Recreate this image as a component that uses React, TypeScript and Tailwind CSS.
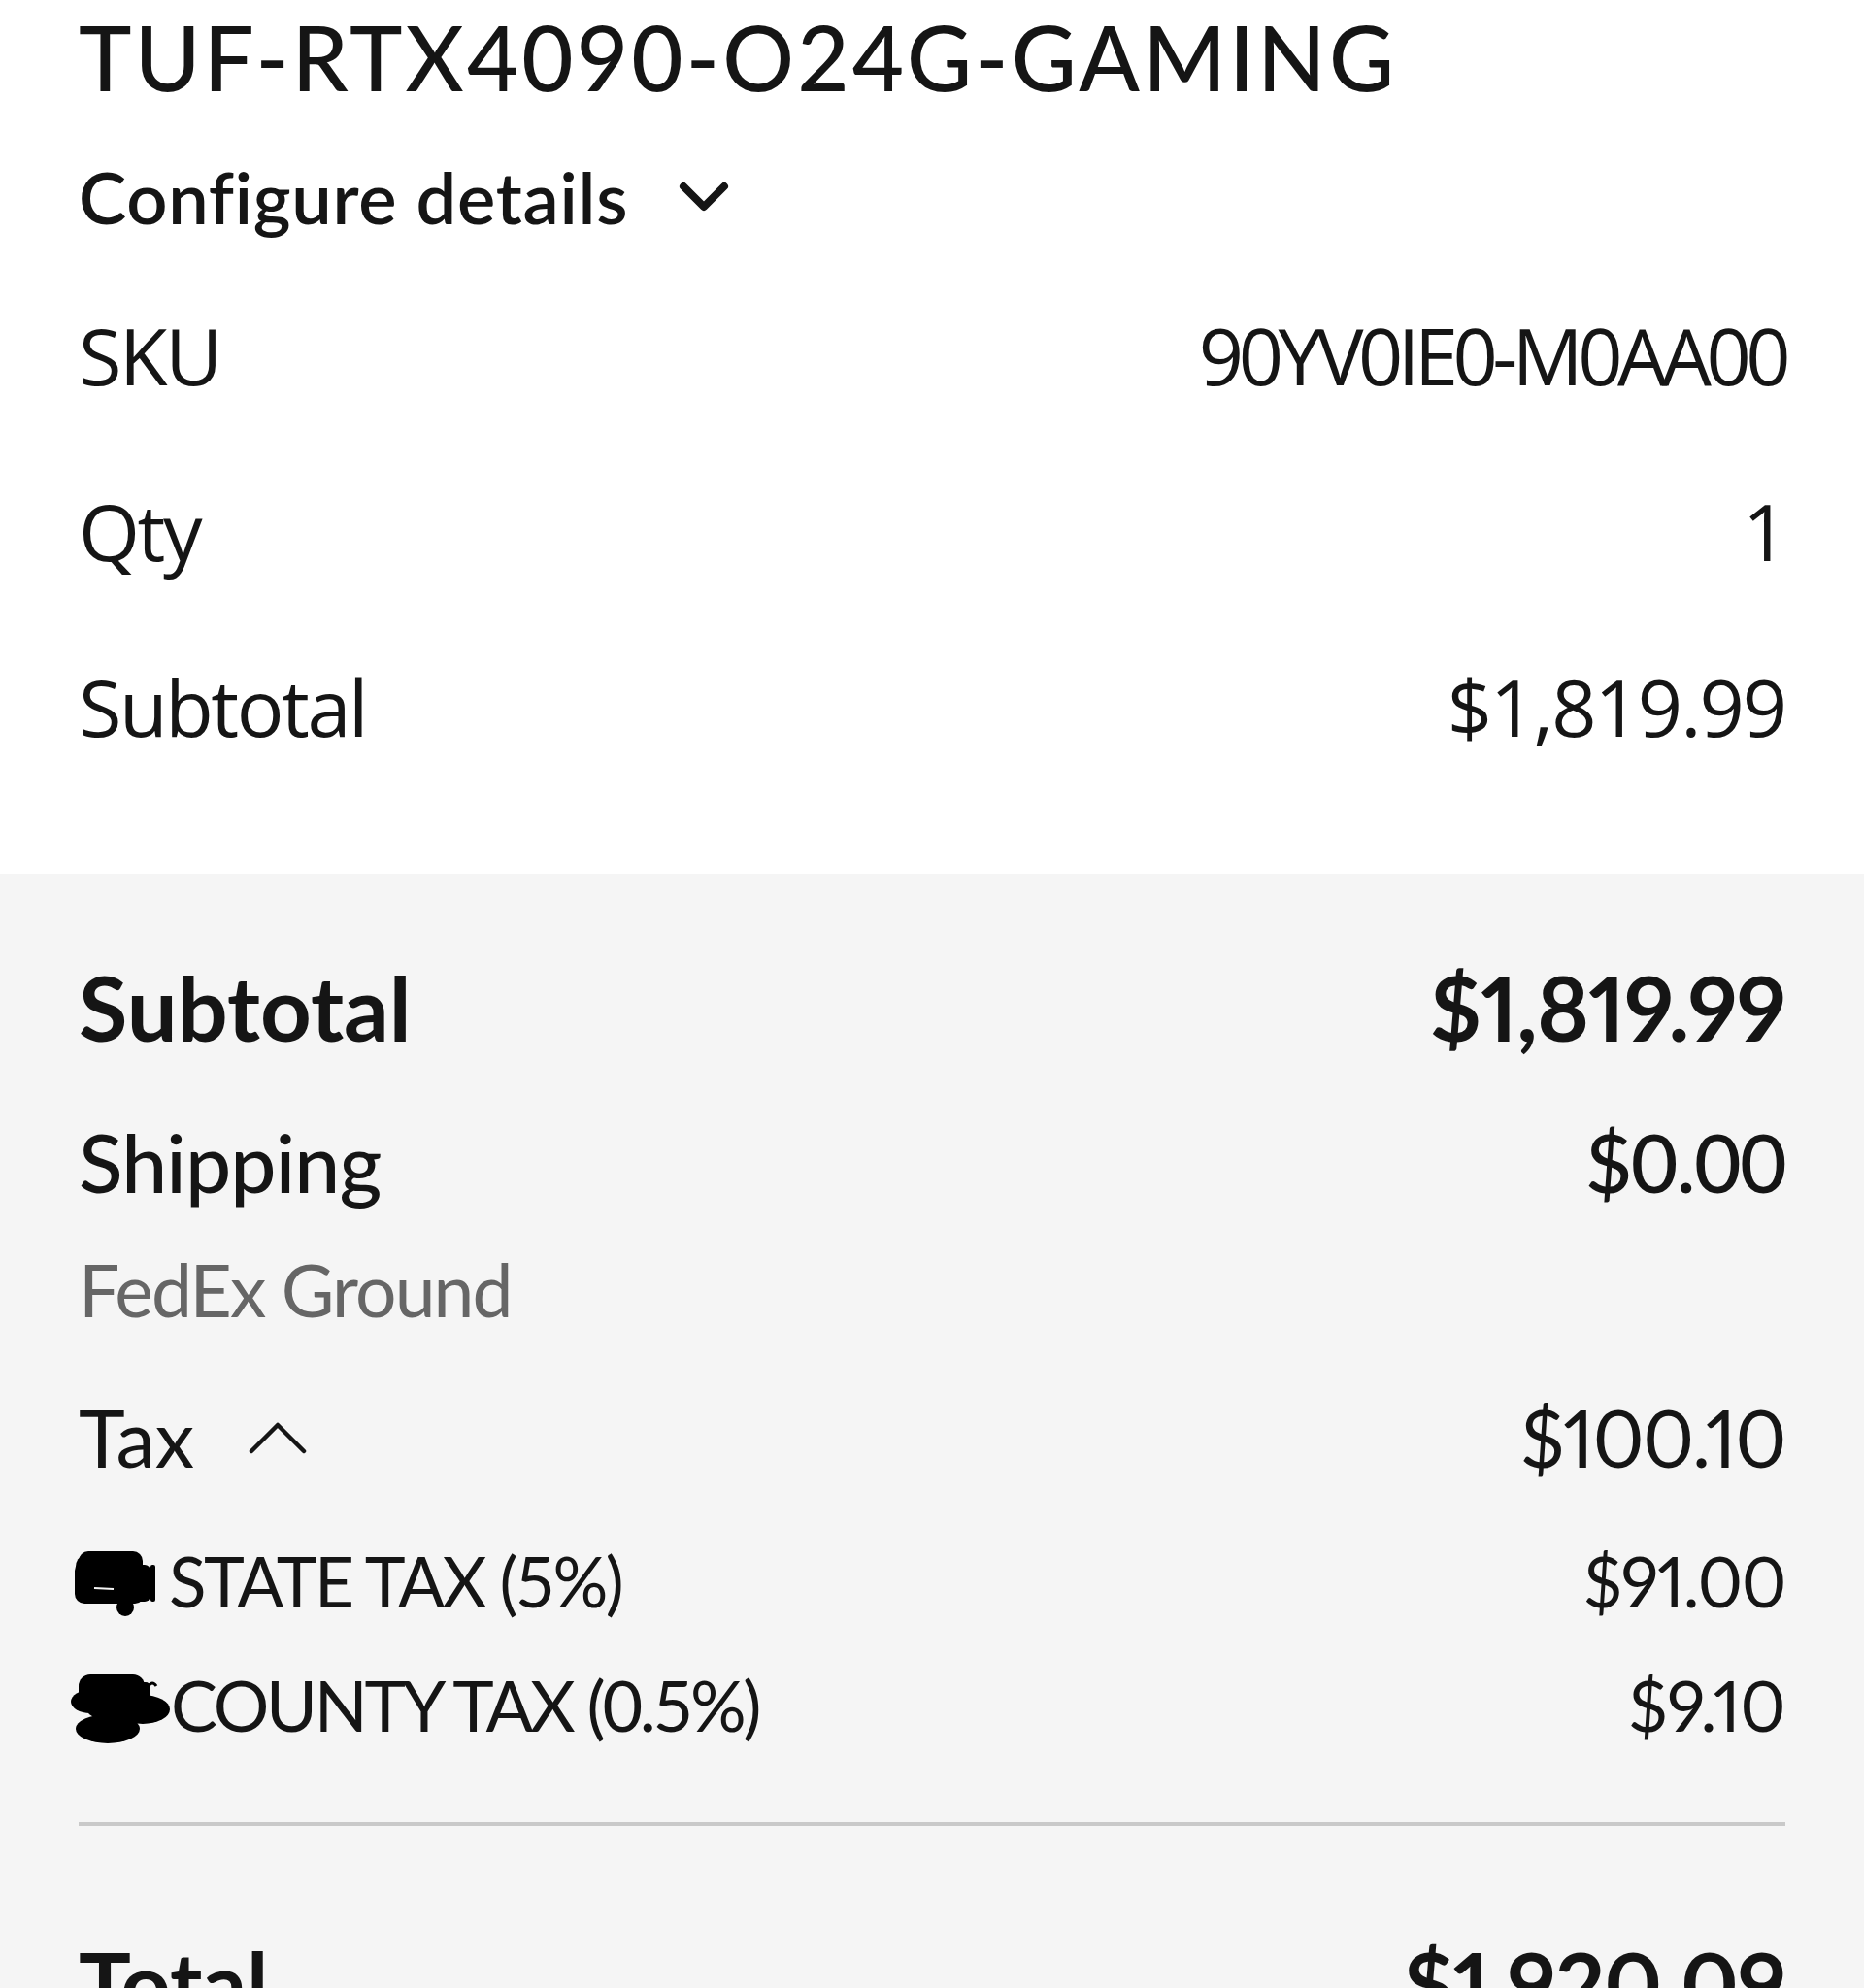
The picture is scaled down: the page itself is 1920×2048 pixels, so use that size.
import { ReactNode } from "react";

const ChevronDown = () => (
  <svg width="52" height="34" viewBox="0 0 52 34" className="ml-[52px] shrink-0" fill="none">
    <polyline points="5,6 26,27 47,6" stroke="#151515" strokeWidth="8" strokeLinecap="round" strokeLinejoin="round" />
  </svg>
);

const ChevronUp = () => (
  <svg width="60" height="36" viewBox="0 0 60 36" className="ml-[56px] shrink-0" fill="none">
    <polyline points="3,32 30,5 57,32" stroke="#151515" strokeWidth="4.5" strokeLinecap="round" strokeLinejoin="round" />
  </svg>
);

// black marker scribbles over the state / county names
const StateScribble = () => (
  <svg width="97" height="90" viewBox="0 0 97 90" className="shrink-0 -ml-[4px]" style={{ overflow: "visible" }}>
    <g fill="#000">
      <rect x="0" y="24" width="72" height="44" rx="10" />
      <rect x="4" y="14" width="66" height="24" rx="10" />
      <ellipse cx="9" cy="30" rx="8" ry="11" />
      <ellipse cx="52" cy="72" rx="9" ry="9" />
      <rect x="58" y="28" width="20" height="38" rx="6" />
      <rect x="78" y="28" width="5" height="38" rx="2" />
    </g>
    <path d="M20 52 L40 53" stroke="#f5f5f5" strokeWidth="2" />
  </svg>
);

const CountyScribble = () => (
  <svg width="103" height="90" viewBox="0 0 103 90" className="shrink-0 -ml-[8px]" style={{ overflow: "visible" }}>
    <g fill="#000">
      <rect x="8" y="14" width="68" height="34" rx="12" />
      <ellipse cx="20" cy="42" rx="20" ry="12" />
      <rect x="16" y="32" width="66" height="26" rx="10" />
      <ellipse cx="74" cy="50" rx="28" ry="15" />
      <ellipse cx="38" cy="70" rx="33" ry="15" />
      <rect x="70" y="22" width="12" height="20" rx="5" />
    </g>
    <path d="M80 26 Q84 20 88 26" stroke="#000" strokeWidth="3" fill="none" />
  </svg>
);

const TopRow = ({ label, value, valueClass = "" }: { label: string; value: string; valueClass?: string }) => (
  <div className="flex items-center justify-between h-[100px]">
    <span>{label}</span>
    <span className={valueClass}>{value}</span>
  </div>
);

const SummaryRow = ({
  left,
  value,
  className,
  valueClass = "proportional-nums",
}: {
  left: ReactNode;
  value: string;
  className: string;
  valueClass?: string;
}) => (
  <div className={`flex items-center justify-between ${className}`}>
    <div className="flex items-center">{left}</div>
    <span className={valueClass}>{value}</span>
  </div>
);

export default function App() {
  return (
    <div className="w-[1920px] min-h-[2048px] bg-[#f5f5f5] text-[#151515]">
      {/* product block */}
      <section className="bg-white px-[81px] pt-[9px] pb-[122px]">
        <h1 className="font-['Lato',sans-serif] text-[92px] leading-[100px] font-medium tracking-[0.034em]">
          TUF-RTX4090-O24G-GAMING
        </h1>
        <button className="mt-[54px] flex items-center h-[80px] font-['Lato',sans-serif] text-[74px] leading-[80px] font-semibold tracking-[0.01em]">
          Configure details
          <ChevronDown />
        </button>
        <div className="mt-[73px] flex flex-col gap-[81px] font-['Open_Sans',sans-serif] text-[81px] leading-[100px] tracking-[-0.03em]">
          <TopRow label="SKU" value="90YV0IE0-M0AA00" valueClass="tracking-[-0.068em]" />
          <TopRow label="Qty" value="1" />
          <TopRow label="Subtotal" value="$1,819.99" valueClass="tracking-[-0.025em]" />
        </div>
      </section>

      {/* order summary */}
      <section className="px-[81px] pt-[88px] font-['Lato',sans-serif]">
        <SummaryRow
          className="h-[100px] text-[92px] leading-[100px] font-bold"
          left={<span>Subtotal</span>}
          value="$1,819.99"
          valueClass="proportional-nums tracking-[-0.01em]"
        />
        <SummaryRow
          className="mt-[59px] h-[100px] text-[84px] leading-[100px] font-medium"
          left={<span className="tracking-[-0.01em]">Shipping</span>}
          value="$0.00"
          valueClass="tracking-[-0.02em]"
        />
        <div className="mt-[36px] h-[90px] text-[75px] leading-[90px] tracking-[-0.025em] text-[#666666]">FedEx Ground</div>
        <SummaryRow
          className="mt-[58px] h-[100px] text-[81px] leading-[100px]"
          left={
            <>
              <span>Tax</span>
              <ChevronUp />
            </>
          }
          value="$100.10"
          valueClass="proportional-nums tracking-[-0.02em]"
        />
        <SummaryRow
          className="mt-[53px] h-[90px] text-[71px] leading-[90px]"
          left={
            <>
              <StateScribble />
              <span className="tracking-[-0.037em]">STATE TAX (5%)</span>
            </>
          }
          value="$91.00"
          valueClass="proportional-nums tracking-[-0.02em]"
        />
        <SummaryRow
          className="mt-[37px] h-[90px] text-[72px] leading-[90px]"
          left={
            <>
              <CountyScribble />
              <span className="tracking-[-0.046em]">COUNTY TAX (0.5%)</span>
            </>
          }
          value="$9.10"
          valueClass="proportional-nums tracking-[-0.01em]"
        />
        <div className="mt-[76px] h-[4px] bg-[#c9c9c9]" />
        <SummaryRow
          className="mt-[111px] h-[100px] text-[90px] leading-[100px] font-bold"
          left={<span>Total</span>}
          value="$1,920.09"
          valueClass="proportional-nums tracking-[-0.01em]"
        />
      </section>
    </div>
  );
}
